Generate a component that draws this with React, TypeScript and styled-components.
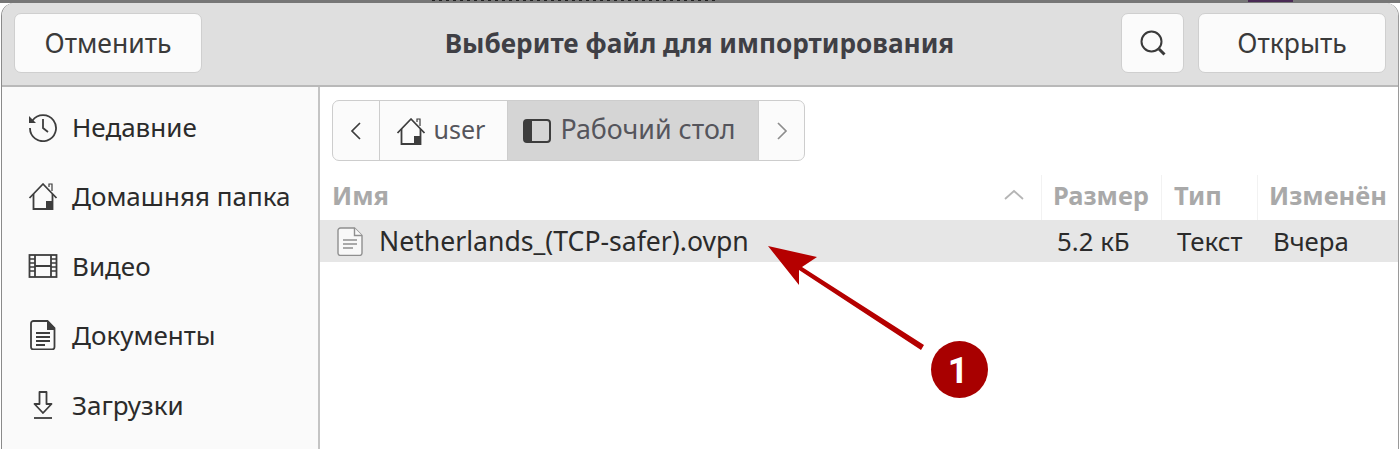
import React from 'react';
import styled, { createGlobalStyle } from 'styled-components';

const GlobalStyle = createGlobalStyle`
  html, body {
    margin: 0;
    padding: 0;
    background: #fff;
  }
`;

const Page = styled.div`
  position: relative;
  width: 1400px;
  height: 449px;
  overflow: hidden;
  background: #fff;
  font-family: "Noto Sans", "DejaVu Sans", sans-serif;
  color: #2e2e2e;
`;

const Backdrop = styled.div`
  position: absolute;
  left: 0;
  top: 0;
  width: 100%;
  height: 3px;
  background: #777;
`;

const BackdropText = styled.div`
  position: absolute;
  left: 432px;
  top: 0;
  width: 285px;
  height: 1px;
  background: repeating-linear-gradient(90deg, #222 0 3px, #777 3px 7px);
`;

const BackdropTile = styled.div`
  position: absolute;
  left: 1248px;
  top: 0;
  width: 45px;
  height: 2px;
  background: #4a2a55;
`;

const Window = styled.div`
  position: relative;
  margin: 0 0 0 2px;
  top: 3px;
  width: 1396px;
  height: 446px;
  display: flex;
  flex-direction: column;
  background: #fff;
  border-radius: 13px 13px 0 0;
  box-shadow: -1px 0 0 #8a8a8a, 1px 0 0 #9a9a9a;
`;

const Header = styled.header`
  height: 84px;
  box-sizing: border-box;
  flex: none;
  display: flex;
  align-items: center;
  padding: 0 12px 2px 12px;
  background: #dfdfdf;
  border-bottom: 2px solid #b9b9b9;
  border-radius: 13px 13px 0 0;
`;

const HeaderButton = styled.button<{ $width: number }>`
  width: ${p => p.$width}px;
  height: 60px;
  flex: none;
  display: flex;
  align-items: center;
  justify-content: center;
  padding: 0;
  background: #fbfbfb;
  border: 1px solid #cfcfcf;
  border-radius: 7px;
  font: 400 26.5px "Noto Sans", sans-serif;
  color: #3a3a3a;
`;

const Title = styled.h1`
  flex: 1;
  margin: 0;
  padding-left: 76px;
  text-align: center;
  font-size: 26.2px;
  font-weight: 700;
  color: #3f3f45;
  white-space: nowrap;
`;

const SearchButton = styled(HeaderButton)`
  margin-right: 14px;
`;

const Body = styled.div`
  flex: 1;
  display: flex;
  min-height: 0;
`;

const Sidebar = styled.nav`
  width: 318px;
  flex: none;
  box-sizing: border-box;
  padding: 5px 0 0 26px;
  background: #fafafa;
  border-right: 2px solid #c4c4c4;
  display: flex;
  flex-direction: column;
`;

const Place = styled.div`
  height: 69.5px;
  flex: none;
  display: flex;
  align-items: center;
  gap: 14px;
  font-size: 26px;
  color: #2b2b2b;
  white-space: nowrap;
`;

const PlaceIcon = styled.svg`
  width: 30px;
  height: 30px;
  flex: none;
  fill: none;
  stroke: #3d3d3d;
  stroke-width: 1.8;
`;

const Main = styled.main`
  flex: 1;
  min-width: 0;
  display: flex;
  flex-direction: column;
  background: #fff;
`;

const PathBar = styled.div`
  margin: 13px 0 0 12px;
  width: 473px;
  height: 61px;
  flex: none;
  box-sizing: border-box;
  display: flex;
  background: #fbfbfb;
  border: 1px solid #cdcdcd;
  border-radius: 7px;
  overflow: hidden;
`;

const PathSegment = styled.div<{ $width: number; $active?: boolean; $shift?: number }>`
  width: ${p => p.$width}px;
  flex: none;
  box-sizing: border-box;
  display: flex;
  align-items: center;
  justify-content: center;
  gap: 8px;
  padding-right: ${p => p.$shift ?? 0}px;
  font-size: ${p => (p.$active ? '26.8px' : '25px')};
  color: #55555c;
  background: ${p => (p.$active ? '#d5d5d5' : 'transparent')};
  border-right: 1px solid #cdcdcd;
  white-space: nowrap;
  &:last-child {
    border-right: 0;
  }
`;

const PathLabel = styled.span`
  margin-bottom: 4px;
`;

const Columns = styled.div`
  margin-top: 14px;
  height: 45px;
  flex: none;
  display: grid;
  grid-template-columns: 721px 120px 96px 1fr;
  font-size: 25.5px;
  font-weight: 700;
  color: #a9a9a9;
`;

const Column = styled.div<{ $pad: number; $line?: boolean }>`
  box-sizing: border-box;
  display: flex;
  align-items: center;
  justify-content: space-between;
  padding: 0 16px 5px ${p => p.$pad}px;
  border-left: ${p => (p.$line ? '1px solid #f2f2f2' : '0')};
  white-space: nowrap;
`;

const FileRow = styled.div`
  height: 42px;
  flex: none;
  display: grid;
  grid-template-columns: 721px 120px 96px 1fr;
  align-items: center;
  font-size: 25.8px;
  color: #2b2b2b;
  background: #e6e6e6;
`;

const Cell = styled.div<{ $pad: number }>`
  display: flex;
  align-items: center;
  gap: 16px;
  padding-left: ${p => p.$pad}px;
  white-space: nowrap;
`;

const FileName = styled.span`
  font-size: 26.6px;
`;

const Callout = styled.svg`
  position: absolute;
  left: 760px;
  top: 236px;
  width: 240px;
  height: 170px;
`;

const CalloutNumber = styled.text`
  font: 700 36px Roboto, Arial, sans-serif;
  fill: #fff;
  text-anchor: middle;
`;

const HomeGlyph = () => (
  <>
    <path d="M1.500 17 15 3l13.500 14" strokeLinejoin="round" />
    <path d="M21 6V3h3v7" strokeWidth="1.200" />
    <path d="M5.500 13v15h19V13" />
    <path d="M18 28v-8h6.500v8z" fill="#3d3d3d" stroke="none" />
  </>
);

export default function App() {
  return (
    <Page>
      <GlobalStyle />
      <Backdrop>
        <BackdropText />
        <BackdropTile />
      </Backdrop>
      <Window>
        <Header>
          <HeaderButton $width={188}>Отменить</HeaderButton>
          <Title>Выберите файл для импортирования</Title>
          <SearchButton $width={63}>
            <svg width="28" height="28" viewBox="0 0 28 28" fill="none" stroke="#3a3a3a" strokeWidth="2">
              <circle cx="12.500" cy="12.500" r="10" />
              <path d="M20 20 25.500 25.500" strokeWidth="3" />
            </svg>
          </SearchButton>
          <HeaderButton $width={188}>Открыть</HeaderButton>
        </Header>
        <Body>
          <Sidebar>
            <Place>
              <PlaceIcon viewBox="0 0 30 30">
                <path d="M4.500 8.500A13 13 0 1 1 2 16" />
                <path d="M1 4v7h7z" fill="#3d3d3d" stroke="none" />
                <path d="M15 7v9l5 4" />
              </PlaceIcon>
              Недавние
            </Place>
            <Place>
              <PlaceIcon viewBox="0 0 30 30">
                <HomeGlyph />
              </PlaceIcon>
              Домашняя папка
            </Place>
            <Place>
              <PlaceIcon viewBox="0 0 30 30">
                <rect x="1.500" y="4" width="27" height="22" />
                <path d="M7 4v22M23 4v22M7 15h16" />
                <path d="M1.500 8h5.500M1.500 12h5.500M1.500 16h5.500M1.500 20h5.500M23 8h5.500M23 12h5.500M23 16h5.500M23 20h5.500" strokeWidth="1.500" />
              </PlaceIcon>
              Видео
            </Place>
            <Place>
              <PlaceIcon viewBox="0 0 30 30">
                <path d="M5.500 1h14l7 7v19a2.500 2.500 0 0 1-2.500 2.500H5.500A2.500 2.500 0 0 1 3 27V3.500A2.500 2.500 0 0 1 5.500 1z" />
                <path d="M19 1h1l7 7v2h-8z" fill="#3d3d3d" stroke="none" />
                <path d="M8 13h14M8 17h14M8 21h14M8 25h9" />
              </PlaceIcon>
              Документы
            </Place>
            <Place>
              <PlaceIcon viewBox="0 0 30 30">
                <path d="M11.500 2h7v12h5l-8.500 9-8.500-9h5z" strokeLinejoin="round" />
                <path d="M6 28h18" />
              </PlaceIcon>
              Загрузки
            </Place>
          </Sidebar>
          <Main>
            <PathBar>
              <PathSegment $width={47}>
                <svg width="12" height="18" viewBox="0 0 12 18" fill="none" stroke="#3d3d3d" strokeWidth="1.700">
                  <path d="M10 1 2 9l8 8" />
                </svg>
              </PathSegment>
              <PathSegment $width={128} $shift={6}>
                <PlaceIcon viewBox="0 0 30 30">
                  <HomeGlyph />
                </PlaceIcon>
                <PathLabel>user</PathLabel>
              </PathSegment>
              <PathSegment $width={251} $active $shift={8}>
                <svg width="30" height="24" viewBox="0 0 30 24" fill="none" stroke="#3d3d3d" strokeWidth="2">
                  <rect x="2" y="1" width="26" height="22" rx="3" />
                  <path d="M5 1h5v22H5a3 3 0 0 1-3-3V4a3 3 0 0 1 3-3z" fill="#3d3d3d" stroke="none" />
                </svg>
                <PathLabel>Рабочий стол</PathLabel>
              </PathSegment>
              <PathSegment $width={46}>
                <svg width="12" height="18" viewBox="0 0 12 18" fill="none" stroke="#8d8d8d" strokeWidth="1.700">
                  <path d="m2 1 8 8-8 8" />
                </svg>
              </PathSegment>
            </PathBar>
            <Columns>
              <Column $pad={12}>
                Имя
                <svg width="22" height="12" viewBox="0 0 22 12" fill="none" stroke="#b5b5b5" strokeWidth="1.800">
                  <path d="m2 10 9-8 9 8" />
                </svg>
              </Column>
              <Column $pad={11} $line>Размер</Column>
              <Column $pad={12} $line>Тип</Column>
              <Column $pad={11} $line>Изменён</Column>
            </Columns>
            <FileRow>
              <Cell $pad={17}>
                <svg width="26" height="29" viewBox="0 0 26 29" fill="#f8f8f8" stroke="#8f8f8f" strokeWidth="1.400">
                  <path d="M3.500 1h14l7.500 7.500V26a2.500 2.500 0 0 1-2.500 2.500h-19A2.500 2.500 0 0 1 1 26V3.500A2.500 2.500 0 0 1 3.500 1z" />
                  <path d="M17.500 1v7.500H25" />
                  <path d="M6 13h14M6 17h14M6 21h10" />
                </svg>
                <FileName>Netherlands_(TCP-safer).ovpn</FileName>
              </Cell>
              <Cell $pad={16}>5.2 кБ</Cell>
              <Cell $pad={16}>Текст</Cell>
              <Cell $pad={16}>Вчера</Cell>
            </FileRow>
          </Main>
        </Body>
      </Window>
      <Callout viewBox="760 236 240 170">
        <path d="M768 246 817 257 802 267 924 345 921 350 799 270 799 285z" fill="#b50000" />
        <circle cx="959.500" cy="369.500" r="28.500" fill="#a80000" />
        <CalloutNumber x="958" y="383">1</CalloutNumber>
      </Callout>
    </Page>
  );
}
